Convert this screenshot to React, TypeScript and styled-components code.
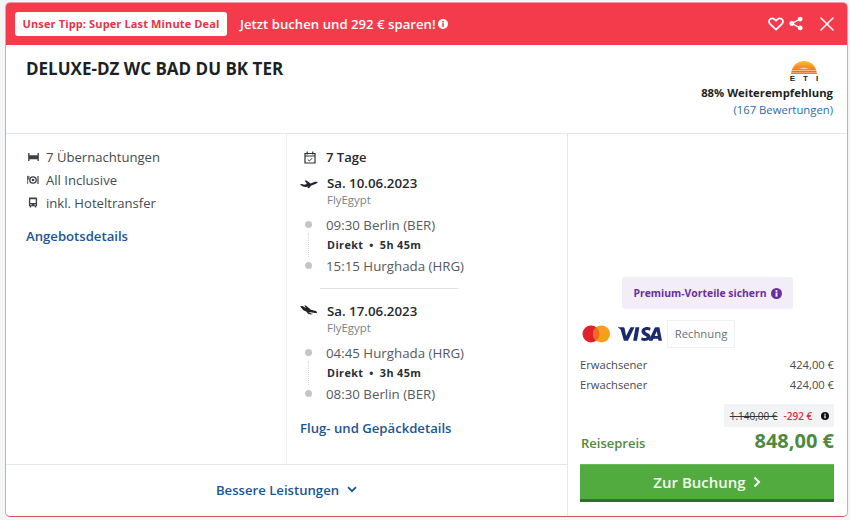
import React from "react";
import styled, { createGlobalStyle } from "styled-components";

const Global = createGlobalStyle`
  html, body { margin: 0; padding: 0; background: #f4f5f7; }
  body { font-family: "Open Sans", "Liberation Sans", sans-serif; color: #333; }
  * { box-sizing: border-box; }
`;
const Page = styled.div`
  width: 850px; height: 520px; padding: 2px 2px 3px 5px;
`;
const Card = styled.div`
  width: 843px; height: 515px; background: #fff; border: 1px solid #e8a0a8; border-bottom-color: #d9505f;
  border-radius: 5px; display: flex; flex-direction: column; overflow: hidden;
`;
const Header = styled.div`
  height: 43px; margin: -1px -1px 0; background: #f33b4c; display: flex; align-items: center; padding: 0 14px 0 10px; color: #fff; flex: none;
`;
const Tag = styled.div`
  height: 24px; width: 212px; background: #fff; color: #e5334a; border-radius: 3px; font-size: 11px; font-weight: 700;
  letter-spacing: .13px; display: flex; align-items: center; justify-content: center; white-space: nowrap;
`;
const HeaderText = styled.div`
  margin-left: 13px; font-size: 13.2px; font-weight: 600; display: flex; align-items: center; gap: 2px; white-space: nowrap;
`;
const HeaderIcons = styled.div`
  margin-left: auto; display: flex; align-items: center; color: #fff;
`;
const IconSlot = styled.span<{ $gap?: number }>`
  display: flex; margin-left: ${p => p.$gap ?? 0}px;
`;
const TitleRow = styled.div`
  height: 89px; border-bottom: 1px solid #e5e7ea; display: flex; justify-content: space-between; padding: 13px 14px 0 20px; flex: none;
`;
const Title = styled.h1`
  margin: 0; font-size: 17px; line-height: 22px; font-weight: 700; color: #1c1f24;
`;
const Rating = styled.div`
  text-align: right; display: flex; flex-direction: column; align-items: flex-end; margin-top: 2px;
`;
const LogoBox = styled.div`
  width: 28px; margin-right: 15px; display: flex; flex-direction: column; align-items: center;
`;
const LogoLetters = styled.div`
  font-family: "Liberation Sans", sans-serif; font-size: 8px; line-height: 8px; font-weight: 700; color: #222; letter-spacing: 8px; margin-right: -8px; white-space: nowrap;
`;
const Recommend = styled.div`
  font-size: 11.3px; line-height: 17px; font-weight: 700; color: #1c1f24; margin-top: 1px;
`;
const Reviews = styled.div`
  font-size: 11.3px; line-height: 17px; color: #2b6ca8; margin-top: 0;
`;
const Body = styled.div`
  flex: 1; display: flex; min-height: 0;
`;
const LeftArea = styled.div`
  width: 562px; display: flex; flex-direction: column; border-right: 1px solid #e5e7ea; flex: none;
`;
const Columns = styled.div`
  flex: 1; display: flex; border-bottom: 1px solid #e5e7ea;
`;
const InfoCol = styled.div`
  width: 281px; border-right: 1px solid #eceef0; padding: 11px 0 0 20px;
`;
const InfoRow = styled.div`
  display: flex; align-items: center; height: 23px; font-size: 13.1px; color: #444a50; gap: 6px;
`;
const InfoIcon = styled.span`
  width: 14px; display: flex; justify-content: center; color: #3c4146;
`;
const TextLink = styled.div`
  font-size: 13.15px; font-weight: 600; color: #1a5596; line-height: 18px; white-space: nowrap;
`;
const OfferLink = styled(TextLink)`
  margin-top: 13px;
`;
const FlightCol = styled.div`
  flex: 1; padding: 13px 0 0 13px; display: flex; flex-direction: column;
`;
const DaysRow = styled.div`
  display: flex; align-items: center; gap: 10px; font-size: 13px; font-weight: 600; color: #24282d; height: 20px; margin-left: 4px;
`;
const LegHead = styled.div`
  display: flex; align-items: center; height: 20px; font-size: 13.3px; font-weight: 600; color: #24282d; gap: 9px; margin-top: 6px;
`;
const Carrier = styled.div`
  font-size: 11.4px; line-height: 15px; color: #7b8085; margin: -1px 0 0 27px;
`;
const Stops = styled.div`
  position: relative; margin-top: 7px; padding-left: 26px;
`;
const StopRow = styled.div`
  position: relative; height: 21px; display: flex; align-items: center; font-size: 13.3px; color: #555a60; white-space: nowrap;
`;
const Dot = styled.span`
  position: absolute; left: -21px; top: 7px; width: 7px; height: 7px; border-radius: 50%; background: #c2c6ca;
`;
const DurationRow = styled.div`
  position: relative; height: 20px; display: flex; align-items: center; font-size: 10.8px; font-weight: 700; color: #2a2e33; gap: 6px; letter-spacing: .4px; padding: 0 0 2px 1px; white-space: nowrap;
`;
const DashLine = styled.span`
  position: absolute; left: -18px; top: -2px; height: 24px; border-left: 1px dotted #d4d6d9;
`;
const Divider = styled.div`
  width: 139px; height: 1px; background: #dfe1e4; margin: 12px 0 6px 20px;
`;
const BaggageLink = styled(TextLink)`
  margin-top: 15px;
`;
const MoreRow = styled.div`
  height: 51px; flex: none; display: flex; align-items: center; justify-content: center; gap: 8px; font-size: 13.15px; font-weight: 600; color: #1a5596; padding-bottom: 2px;
`;
const PriceCol = styled.div`
  flex: 1; display: flex; flex-direction: column; padding: 0 13px 0 12px; justify-content: flex-end;
`;
const Premium = styled.div`
  width: 171px; height: 32px; margin: 0 0 11px 42px; background: #f3edf8; border-radius: 3px; display: flex; align-items: center; justify-content: center; gap: 4px; font-size: 10.4px; font-weight: 700; color: #6b2fa0; white-space: nowrap;
`;
const Payments = styled.div`
  display: flex; align-items: center; margin-left: 2px;
`;
const Visa = styled.span`
  display: flex; margin: 0 5px 0 8px;
`;
const InvoiceTag = styled.div`
  width: 68px; height: 28px; border: 1px solid #eef0f2; display: flex; align-items: center; justify-content: center; font-size: 11.3px; color: #6a6f75; padding-bottom: 2px;
`;
const LineItems = styled.div`
  margin-top: 6px; display: flex; flex-direction: column; gap: 0;
`;
const LineItem = styled.div`
  height: 20px; display: flex; justify-content: space-between; align-items: center; font-size: 11.2px; color: #444a50;
`;
const DiscountRow = styled.div`
  display: flex; justify-content: flex-end; margin-top: 10px;
`;
const Discount = styled.div`
  height: 23px; width: 110px; background: #f1f3f5; display: flex; align-items: center; justify-content: center; gap: 6px; font-size: 10px; color: #333; padding-left: 1px;
`;
const OldPrice = styled.span`
  text-decoration: line-through; color: #333;
`;
const Saving = styled.span`
  color: #e5283c; font-weight: 600; margin-right: 3px;
`;
const TotalRow = styled.div`
  display: flex; justify-content: space-between; align-items: flex-end; height: 28px; color: #4d8a3e; font-weight: 700; margin-top: 0;
`;
const TotalLabel = styled.span`
  font-size: 13px; font-weight: 600; line-height: 18px; margin: 0 0 3px 1px;
`;
const TotalValue = styled.span`
  font-size: 20px; line-height: 28px;
`;
const BookButton = styled.div`
  height: 38px; margin: 9px 0 14px; background: #52ab3e; border-bottom: 3px solid #2f6f2a; border-top: 1px solid #6cb85a; color: #f4fbf2; font-size: 15px; font-weight: 600; display: flex; align-items: center; justify-content: center; gap: 7px;
`;

const InfoDot = ({ size = 11, color = "currentColor", glyph = "#fff" }: { size?: number; color?: string; glyph?: string }) => (
  <svg width={size} height={size} viewBox="0 0 12 12">
    <circle cx="6" cy="6" r="6" fill={color} />
    <rect x="5" y="5" width="2" height="4.4" fill={glyph} />
    <rect x="5" y="2.4" width="2" height="1.8" fill={glyph} />
  </svg>
);
const Plane = ({ landing }: { landing?: boolean }) => (
  landing ? (
    <svg width="18" height="12" viewBox="0 0 18 12">
      <path d="M0 1.200 2.600 1l3.500 2.300L4.200.4h1.700l5 4.400 4 .9c1.200.3 2.300 1 2.300 1.600 0 .7-1 .8-2.200.6L9 6.900l-1 .8L6.600 6.800 3.400 5.200z" fill="#1f2327" />
      <path d="M8.300 6.800c1.500 1.200 3.300 2 5 2.300l-3 .4c-1.400-.4-2.700-1-3.700-1.900z" fill="#1f2327" />
    </svg>
  ) : (
    <svg width="18" height="12" viewBox="0 0 18 12">
      <path d="M0 7.300l2-.4 2 .8 3-.7L4.600 3.400h1.800l4.200 3 3.800-1.300c1.200-.4 2.800-.5 3.200 0 .3.500-.5 1.100-1.700 1.600L9.600 9.200c-2.700 1-5 .9-6.800.3C1.800 9 .8 8.200 0 7.300z" fill="#1f2327" />
      <path d="M8 9.400l3.300-1.200-2 2.800H7.400z" fill="#1f2327" />
    </svg>
  )
);

const Leg = ({ date, landing, from, to, dur }: { date: string; landing?: boolean; from: string; to: string; dur: string }) => (
  <>
    <LegHead><Plane landing={landing} />{date}</LegHead>
    <Carrier>FlyEgypt</Carrier>
    <Stops>
      <StopRow><Dot />{from}</StopRow>
      <DurationRow><DashLine />Direkt <span>•</span> {dur}</DurationRow>
      <StopRow><Dot />{to}</StopRow>
    </Stops>
  </>
);

export default function App() {
  return (
    <Page>
      <Global />
      <Card>
        <Header>
          <Tag>Unser Tipp: Super Last Minute Deal</Tag>
          <HeaderText>Jetzt buchen und 292 € sparen! <InfoDot size={10} color="#fff" glyph="#f33b4c" /></HeaderText>
          <HeaderIcons>
            <svg width="16" height="14" viewBox="0 0 16 14">
              <path d="M8 12.600 2 6.800C.4 5.200.8 2.800 2.600 1.800c1.900-1 4 0 5.400 2 1.400-2 3.500-3 5.400-2 1.800 1 2.200 3.400.6 5z" fill="none" stroke="#fff" strokeWidth="1.800" strokeLinejoin="round" />
            </svg>
            <IconSlot $gap={5}>
              <svg width="14" height="15" viewBox="0 0 15 15">
                <circle cx="3" cy="7.500" r="2.600" fill="#fff" /><circle cx="12" cy="2.800" r="2.600" fill="#fff" /><circle cx="12" cy="12.200" r="2.600" fill="#fff" />
                <path d="M12 2.800 3 7.500l9 4.700" fill="none" stroke="#fff" strokeWidth="1.500" />
              </svg>
            </IconSlot>
            <IconSlot $gap={17}>
              <svg width="14" height="14" viewBox="0 0 14 14"><path d="M1 1l12 12M13 1 1 13" stroke="#fff" strokeWidth="1.500" strokeLinecap="round" /></svg>
            </IconSlot>
          </HeaderIcons>
        </Header>
        <TitleRow>
          <Title>DELUXE-DZ WC BAD DU BK TER</Title>
          <Rating>
            <LogoBox>
              <svg width="28" height="15" viewBox="0 0 28 15">
                <defs><linearGradient id="sun" x1="0" y1="0" x2="0" y2="1"><stop offset="0" stopColor="#fbc02d" /><stop offset="1" stopColor="#ee5a1f" /></linearGradient></defs>
                <path d="M1 14C2 6 7 1 14 1s12 5 13 13z" fill="url(#sun)" />
                <path d="M1 10.500h26M1 12.800h26" stroke="#f9dcc0" strokeWidth=".7" />
                <path d="M8 8.500l6-.8 6 .8-6 .6z" fill="#fff" opacity=".8" />
              </svg>
              <LogoLetters>ETI</LogoLetters>
            </LogoBox>
            <Recommend>88% Weiterempfehlung</Recommend>
            <Reviews>(167 Bewertungen)</Reviews>
          </Rating>
        </TitleRow>
        <Body>
          <LeftArea>
            <Columns>
              <InfoCol>
                <InfoRow>
                  <InfoIcon><svg width="11" height="8" viewBox="0 0 12 9"><path d="M0 0h1.500v2.500h9V0H12v9h-1.500V7h-9v2H0z" fill="currentColor" /></svg></InfoIcon>
                  7 Übernachtungen
                </InfoRow>
                <InfoRow>
                  <InfoIcon><svg width="12" height="10" viewBox="0 0 13 11"><circle cx="6.500" cy="5.500" r="3.500" fill="none" stroke="currentColor" strokeWidth="1.500" /><circle cx="6.500" cy="5.500" r="1.500" fill="currentColor" /><path d="M.6 1v9M1 1v4M2 1v4" stroke="currentColor" strokeWidth=".9" /><path d="M12 1v9" stroke="currentColor" strokeWidth="1.300" /></svg></InfoIcon>
                  All Inclusive
                </InfoRow>
                <InfoRow>
                  <InfoIcon><svg width="10" height="11" viewBox="0 0 11 12"><path d="M1 1.500C1 .8 1.600.5 2 .5h7c.5 0 1 .3 1 1V10H9v1.500H7.500V10h-4v1.500H2V10H1zm1.500 1v4h6v-4zM2.500 8v1h1.500V8zm4.500 0v1h1.500V8z" fill="currentColor" fillRule="evenodd" /></svg></InfoIcon>
                  inkl. Hoteltransfer
                </InfoRow>
                <OfferLink>Angebotsdetails</OfferLink>
              </InfoCol>
              <FlightCol>
                <DaysRow>
                  <svg width="12" height="13" viewBox="0 0 12 13"><path d="M1 2.500h10V12H1z M1 5h10M3.200.5v3M8.800.5v3" fill="none" stroke="#2a2e33" strokeWidth="1.200" /><path d="M3.800 8.500l1.600 1.500 2.800-2.800" fill="none" stroke="#2a2e33" strokeWidth="1" /></svg>
                  7 Tage
                </DaysRow>
                <Leg date="Sa. 10.06.2023" from="09:30 Berlin (BER)" to="15:15 Hurghada (HRG)" dur="5h 45m" />
                <Divider />
                <Leg date="Sa. 17.06.2023" landing from="04:45 Hurghada (HRG)" to="08:30 Berlin (BER)" dur="3h 45m" />
                <BaggageLink>Flug- und Gepäckdetails</BaggageLink>
              </FlightCol>
            </Columns>
            <MoreRow>
              Bessere Leistungen
              <svg width="10" height="7" viewBox="0 0 10 7"><path d="M1 1.200l4 4 4-4" fill="none" stroke="#1a5596" strokeWidth="1.800" /></svg>
            </MoreRow>
          </LeftArea>
          <PriceCol>
            <Premium>Premium-Vorteile sichern <InfoDot size={11} color="#6b2fa0" /></Premium>
            <Payments>
              <svg width="28" height="18" viewBox="0 0 28 18"><circle cx="9" cy="9" r="8.500" fill="#e2202c" /><circle cx="19.500" cy="9" r="8.500" fill="#f79e1b" /><path d="M14.200 2.300a8.500 8.500 0 0 1 0 13.400 8.500 8.500 0 0 1 0-13.400z" fill="#f26a21" /></svg>
              <Visa>
                <svg width="44" height="16" viewBox="0 0 47 16"><path d="M0 .8h5.500c.8 0 1.400.5 1.600 1.300l1.500 8L13.300.8h4.300L10.600 15.300H6.300L2.900 3.400C2 2.500 1 1.800 0 1.400z M18.700.8h4.100l-2.500 14.500h-4.100z M34.800 1.200l-.6 3.200c-1.800-.9-5.200-1-5.200.6 0 1.500 5.700 2 5.700 6 0 4.300-6.400 5.400-10 3.700l.6-3.300c2.100 1.200 5.300 1.500 5.400-.2 0-1.600-5.600-2-5.600-6C25.100.9 31 -.5 34.800 1.200z M41 .8h3.200L47 15.300h-3.700l-.5-2.200h-5l-.8 2.200h-4.200L39 1.800C39.200 1.100 40 .8 41 .8zm.4 4.200-2.200 5.100h3.200z" fill="#1a2a6c" fillRule="evenodd" /></svg>
              </Visa>
              <InvoiceTag>Rechnung</InvoiceTag>
            </Payments>
            <LineItems>
              <LineItem><span>Erwachsener</span><span>424,00 €</span></LineItem>
              <LineItem><span>Erwachsener</span><span>424,00 €</span></LineItem>
            </LineItems>
            <DiscountRow>
              <Discount><OldPrice>1.140,00 €</OldPrice><Saving>-292 €</Saving><InfoDot size={8} color="#111" /></Discount>
            </DiscountRow>
            <TotalRow><TotalLabel>Reisepreis</TotalLabel><TotalValue>848,00 €</TotalValue></TotalRow>
            <BookButton>
              Zur Buchung
              <svg width="8" height="12" viewBox="0 0 8 12"><path d="M1.500 1.500 6 6l-4.500 4.500" fill="none" stroke="#f4fbf2" strokeWidth="2" /></svg>
            </BookButton>
          </PriceCol>
        </Body>
      </Card>
    </Page>
  );
}
